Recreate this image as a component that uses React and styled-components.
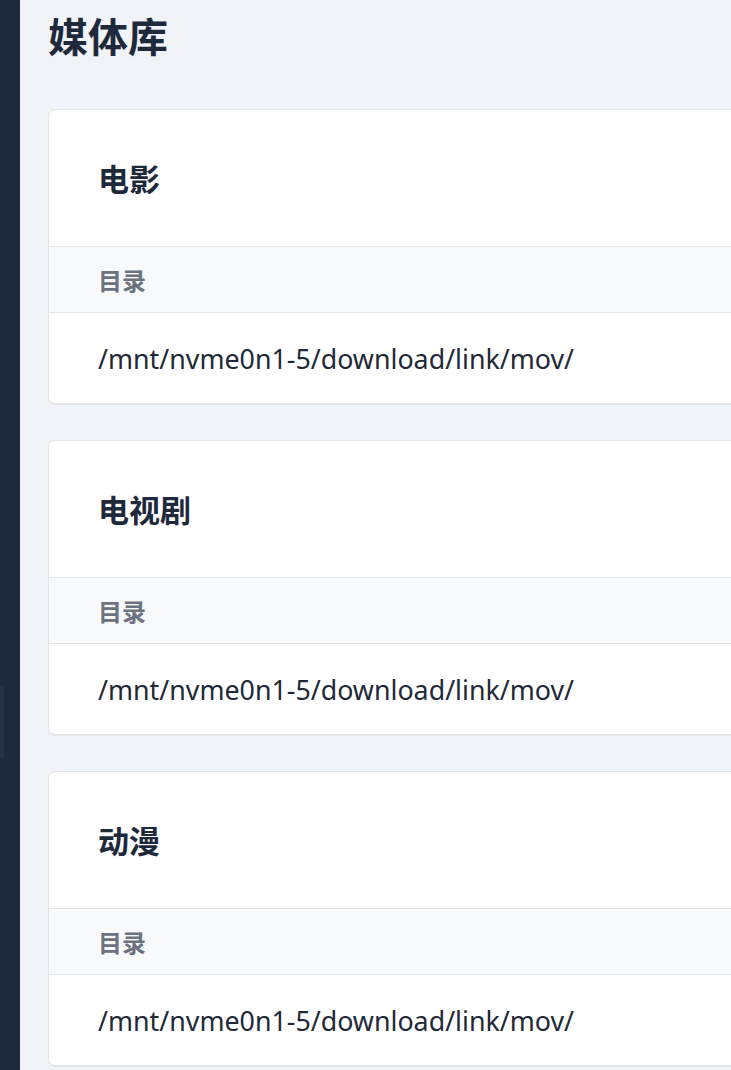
import React from "react";
import styled, { createGlobalStyle } from "styled-components";

const Global = createGlobalStyle`
  html, body { margin: 0; padding: 0; }
  body {
    background: #f0f3f8;
    font-family: "Noto Sans", "Noto Sans CJK SC", sans-serif;
    overflow: hidden;
  }
`;

const Layout = styled.div`
  display: flex;
  width: 731px;
  height: 1070px;
  overflow: hidden;
`;

const Sidebar = styled.aside`
  flex: 0 0 20px;
  background: #1e293b;
  display: flex;
  flex-direction: column;
`;

const NavItem = styled.div`
  margin-top: 686px;
  width: 4px;
  height: 72px;
  background: #263144;
`;

const Main = styled.main`
  flex: 1 0 auto;
  padding: 9px 0 0 28px;
  display: flex;
  flex-direction: column;
  gap: 35px;
`;

const PageTitle = styled.h1`
  margin: 0 0 13px;
  font-family: "Noto Sans CJK SC", sans-serif;
  font-size: 40px;
  line-height: 52px;
  font-weight: 700;
  color: #1e293b;
`;

const Card = styled.section`
  width: 900px;
  background: #ffffff;
  border: 1px solid #e3e5e9;
  border-bottom-width: 2px;
  border-radius: 7px;
  overflow: hidden;
`;

const CardHeader = styled.header`
  padding: 48px 49px;
  border-bottom: 1px solid #e3e5e9;
`;

const CardTitle = styled.h2`
  margin: 0;
  font-family: "Noto Sans CJK SC", sans-serif;
  font-size: 31px;
  line-height: 40px;
  font-weight: 700;
  color: #1e293b;
`;

const HeadRow = styled.div`
  display: flex;
  align-items: center;
  height: 65px;
  padding: 0 49px;
  background: #f8f9fb;
  border-bottom: 1px solid #e3e5e9;
  font-family: "Noto Sans CJK SC", sans-serif;
  font-size: 24px;
  font-weight: 700;
  color: #6b7280;
`;

const BodyRow = styled.div`
  display: flex;
  align-items: center;
  height: 90px;
  padding: 0 49px;
  font-family: "Noto Sans", sans-serif;
  font-size: 26.8px;
  color: #1f2937;
`;

const libraries = [
  { name: "电影", path: "/mnt/nvme0n1-5/download/link/mov/" },
  { name: "电视剧", path: "/mnt/nvme0n1-5/download/link/mov/" },
  { name: "动漫", path: "/mnt/nvme0n1-5/download/link/mov/" },
];

export default function App() {
  return (
    <>
      <Global />
      <Layout>
        <Sidebar>
          <NavItem />
        </Sidebar>
        <Main>
          <PageTitle>媒体库</PageTitle>
          {libraries.map((lib) => (
            <Card key={lib.name}>
              <CardHeader>
                <CardTitle>{lib.name}</CardTitle>
              </CardHeader>
              <HeadRow>目录</HeadRow>
              <BodyRow>{lib.path}</BodyRow>
            </Card>
          ))}
        </Main>
      </Layout>
    </>
  );
}
